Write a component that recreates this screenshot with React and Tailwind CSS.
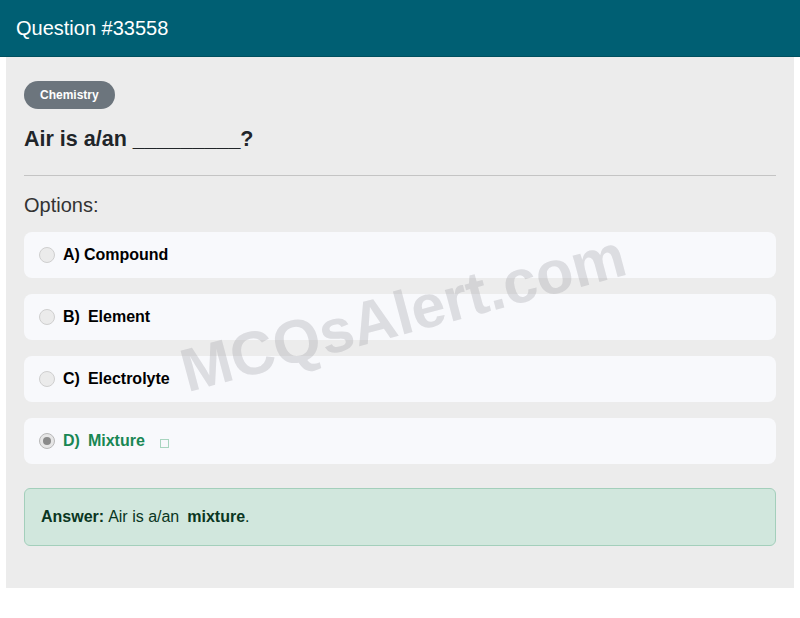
export default function App() {
  const options = [
    { key: "A)", text: "Compound", gap: "ml-1" },
    { key: "B)", text: "Element", gap: "ml-2" },
    { key: "C)", text: "Electrolyte", gap: "ml-2" },
    { key: "D)", text: "Mixture", gap: "ml-2", correct: true },
  ];

  return (
    <div className="min-h-screen bg-white" style={{ fontFamily: '"Liberation Sans", Arial, sans-serif' }}>
      {/* Header */}
      <div className="bg-[#005f73] h-[57px] px-4 flex items-center border-b border-[#00505f]">
        <h1 className="text-white text-[20px]">Question #33558</h1>
      </div>

      {/* Body */}
      <div className="relative mx-[6px] bg-[#ececec] h-[531px] px-[18px] pt-6 overflow-hidden">
        <span className="inline-flex items-center h-7 px-4 rounded-full bg-[#6c757d] text-white text-xs font-bold">
          Chemistry
        </span>
        <h2 className="mt-[17px] text-[21.5px] leading-[26px] font-bold text-[#212529]">Air is a/an _________?</h2>
        <hr className="mt-[23px] border-0 border-t border-[#c4c4c4]" />
        <p className="mt-[17px] text-[20px] leading-[24px] text-[#333]">Options:</p>

        <div className="mt-[15px] flex flex-col gap-4">
          {options.map((o) => (
            <div key={o.key} className="h-[46px] rounded-lg bg-[#f8f9fc] flex items-center pl-[15px]">
              <span
                className={`w-4 h-4 rounded-full border flex items-center justify-center ${
                  o.correct ? "border-[#b8b8b8] bg-[#e6e6e6]" : "border-[#cfcfcf] bg-[#ebebeb]"
                }`}
              >
                {o.correct && <span className="w-2 h-2 rounded-full bg-[#8a8a8a]" />}
              </span>
              <span className={`ml-2 font-bold text-base ${o.correct ? "text-[#198754]" : "text-black"}`}>
                {o.key}
              </span>
              <span className={`${o.gap} font-bold text-base ${o.correct ? "text-[#198754]" : "text-black"}`}>
                {o.text}
              </span>
              {o.correct && <span className="ml-[15px] mt-1 w-[9px] h-[9px] border border-[#a8d5bf]" />}
            </div>
          ))}
        </div>

        <div className="mt-6 h-[58px] rounded-md bg-[#d1e7dd] border border-[#a3cfbb] flex items-center px-4 text-base text-[#0a3622]">
          <span className="font-bold">Answer:</span>
          <span className="ml-1">Air is a/an</span>
          <span className="ml-2 font-bold">mixture</span>
          <span>.</span>
        </div>

        {/* Watermark */}
        <span className="absolute left-[184px] top-[284px] pointer-events-none select-none text-[61px] leading-none font-bold text-[#9a9ca3]/30 -rotate-[15deg] origin-bottom-left whitespace-nowrap">
          MCQsAlert.com
        </span>
      </div>
    </div>
  );
}
